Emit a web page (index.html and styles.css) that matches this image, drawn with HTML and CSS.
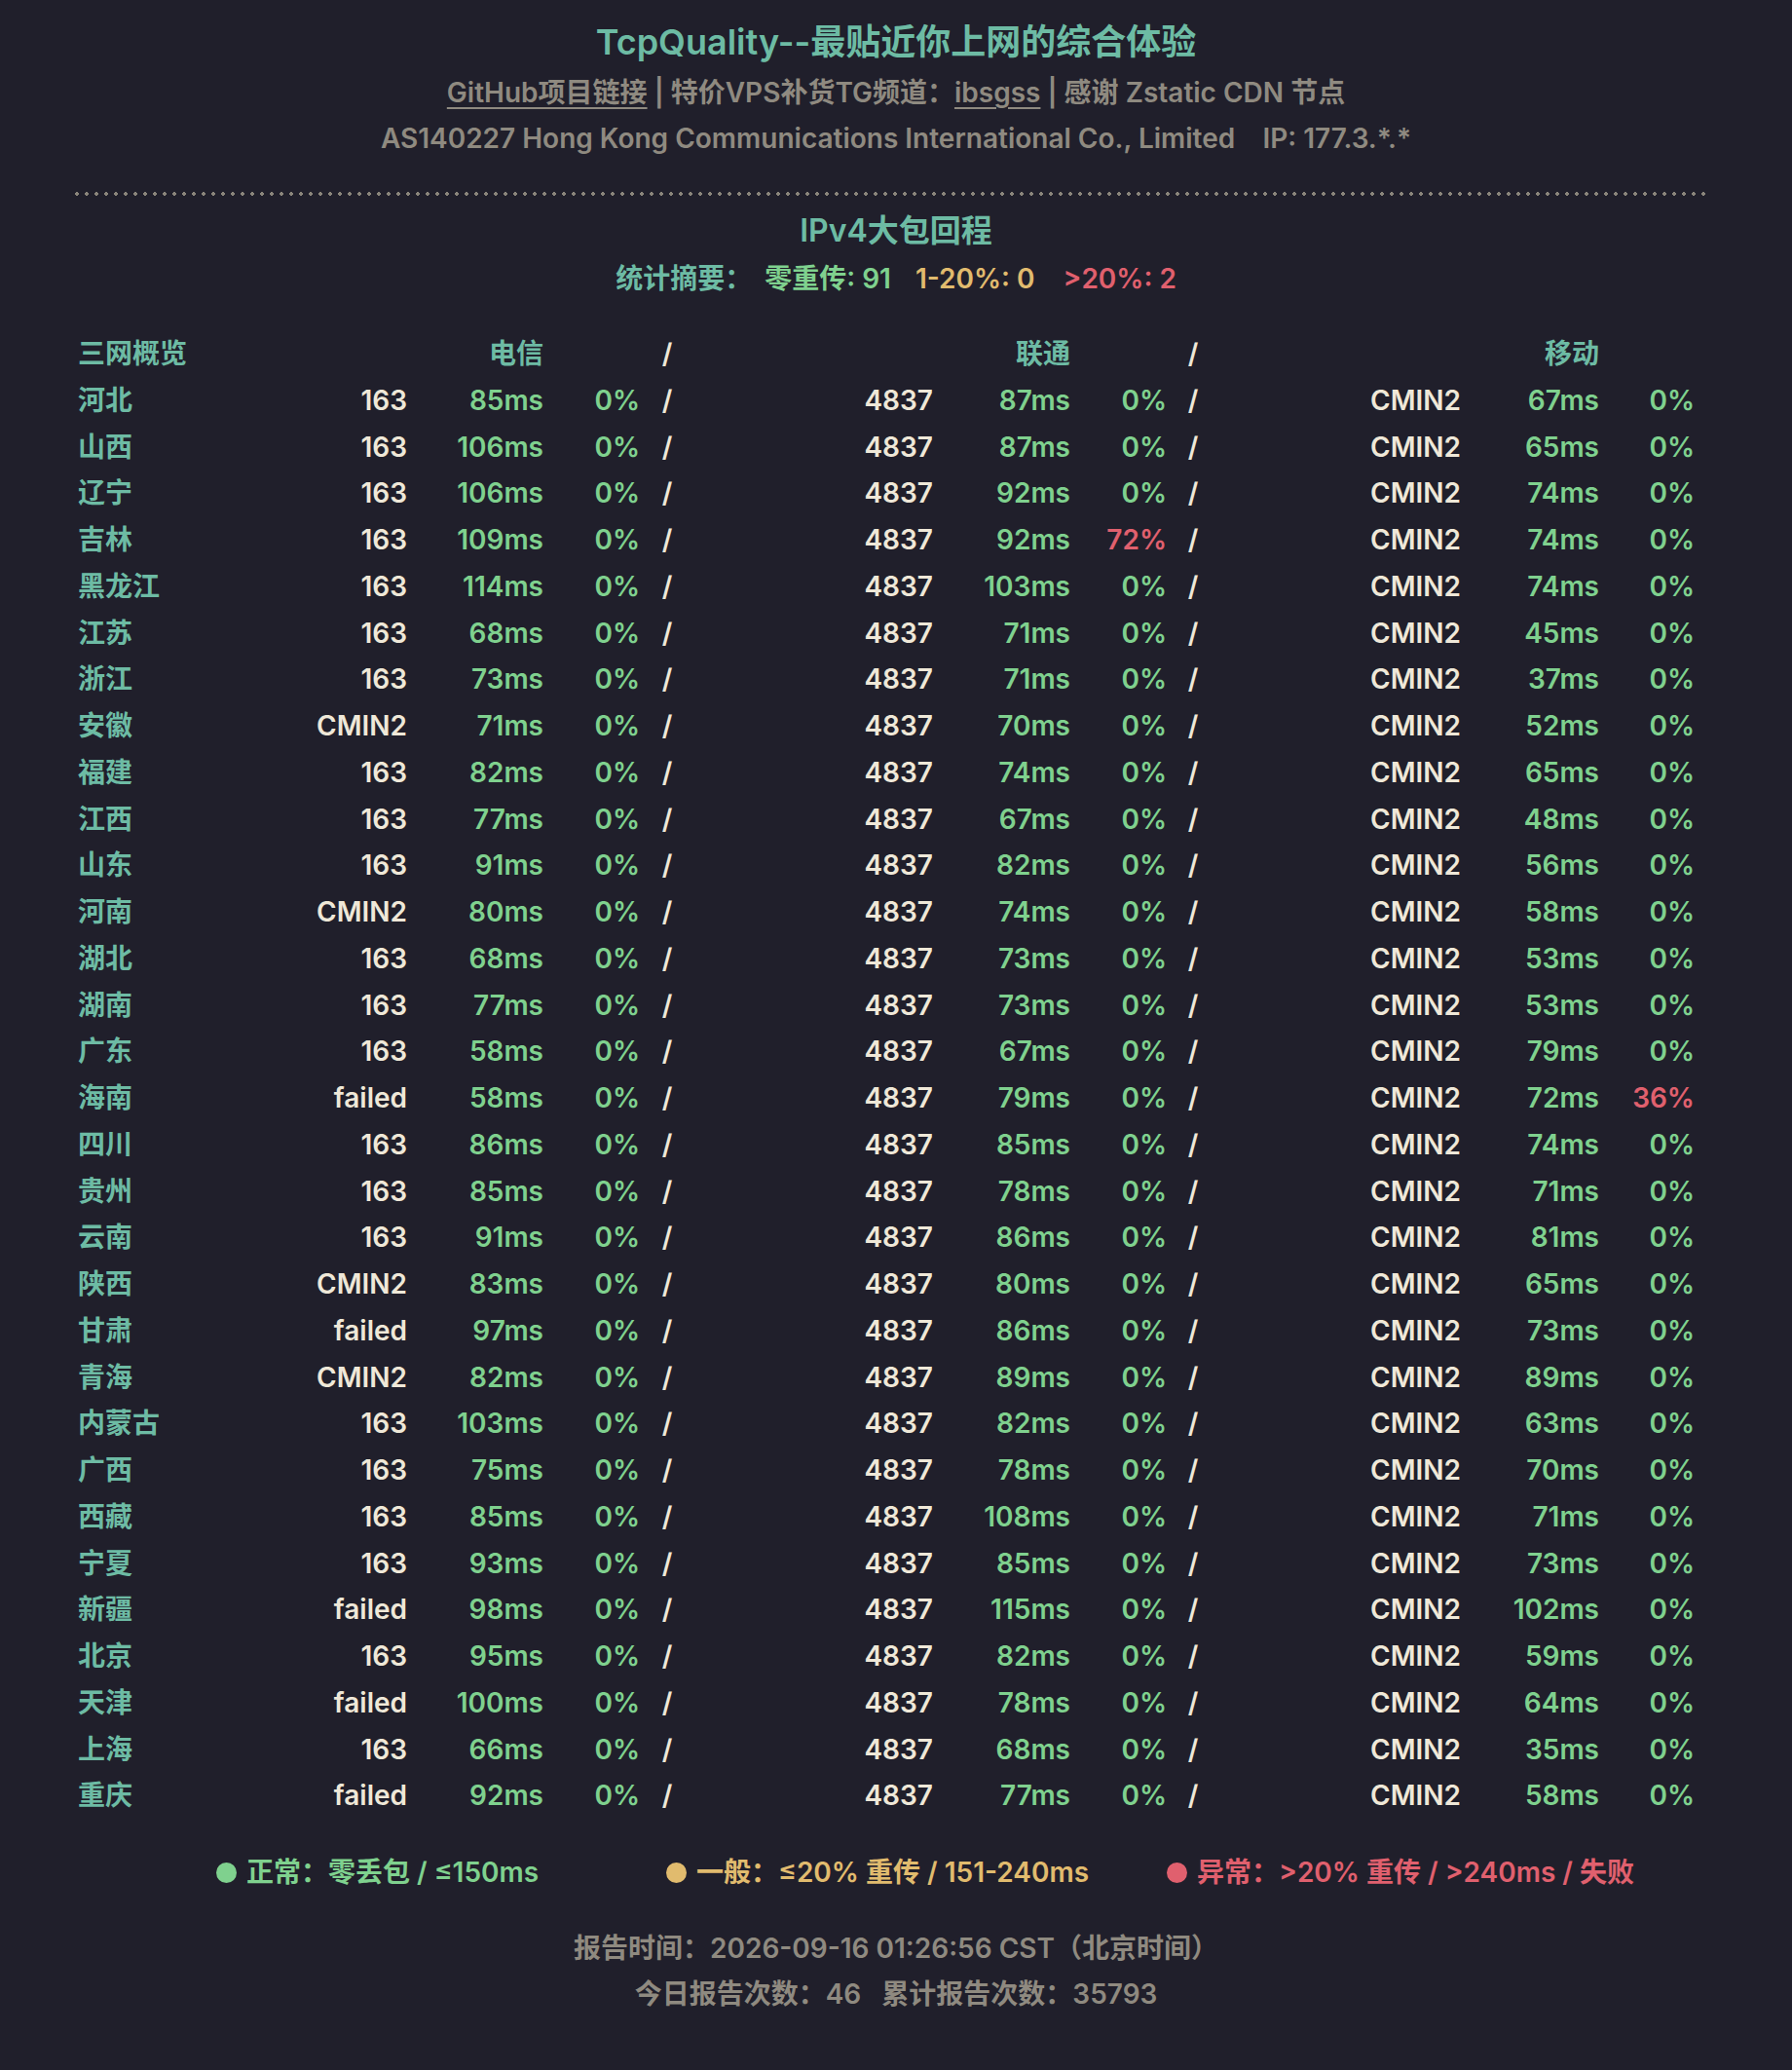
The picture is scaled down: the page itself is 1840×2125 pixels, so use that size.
FILE: index.html
```html
<!DOCTYPE html>
<html lang="zh-CN">
<head>
<meta charset="utf-8">
<title>TcpQuality</title>
<link rel="stylesheet" href="styles.css">
</head>
<body>
<div class="page">
  <header class="head">
    <h1 class="title">TcpQuality--最贴近你上网的综合体验</h1>
    <p class="sub"><a class="lnk" href="#">GitHub项目链接</a> | 特价VPS补货TG频道：<a class="lnk" href="#">ibsgss</a> | 感谢 Zstatic CDN 节点</p>
    <p class="asline">AS140227 Hong Kong Communications International Co., Limited&nbsp;&nbsp;&nbsp;&nbsp;IP: 177.3.*.*</p>
  </header>
  <div class="dots"></div>
  <h2 class="sec">IPv4大包回程</h2>
  <p class="summary"><span class="teal">统计摘要：</span><span class="g s2">零重传: 91</span><span class="y s3">1-20%: 0</span><span class="r s4">&gt;20%: 2</span></p>

  <div class="tbl">
    <div class="row hdr"><span class="prov">三网概览</span><span></span><span class="ms">电信</span><span></span><span class="sl">/</span><span></span><span class="ms">联通</span><span></span><span class="sl">/</span><span></span><span class="ms">移动</span><span></span></div>
    <div class="row"><span class="prov">河北</span><span class="as">163</span><span class="ms">85ms</span><span class="pc">0%</span><span class="sl">/</span><span class="as">4837</span><span class="ms">87ms</span><span class="pc">0%</span><span class="sl">/</span><span class="as">CMIN2</span><span class="ms">67ms</span><span class="pc">0%</span></div>
    <div class="row"><span class="prov">山西</span><span class="as">163</span><span class="ms">106ms</span><span class="pc">0%</span><span class="sl">/</span><span class="as">4837</span><span class="ms">87ms</span><span class="pc">0%</span><span class="sl">/</span><span class="as">CMIN2</span><span class="ms">65ms</span><span class="pc">0%</span></div>
    <div class="row"><span class="prov">辽宁</span><span class="as">163</span><span class="ms">106ms</span><span class="pc">0%</span><span class="sl">/</span><span class="as">4837</span><span class="ms">92ms</span><span class="pc">0%</span><span class="sl">/</span><span class="as">CMIN2</span><span class="ms">74ms</span><span class="pc">0%</span></div>
    <div class="row"><span class="prov">吉林</span><span class="as">163</span><span class="ms">109ms</span><span class="pc">0%</span><span class="sl">/</span><span class="as">4837</span><span class="ms">92ms</span><span class="pc bad">72%</span><span class="sl">/</span><span class="as">CMIN2</span><span class="ms">74ms</span><span class="pc">0%</span></div>
    <div class="row"><span class="prov">黑龙江</span><span class="as">163</span><span class="ms">114ms</span><span class="pc">0%</span><span class="sl">/</span><span class="as">4837</span><span class="ms">103ms</span><span class="pc">0%</span><span class="sl">/</span><span class="as">CMIN2</span><span class="ms">74ms</span><span class="pc">0%</span></div>
    <div class="row"><span class="prov">江苏</span><span class="as">163</span><span class="ms">68ms</span><span class="pc">0%</span><span class="sl">/</span><span class="as">4837</span><span class="ms">71ms</span><span class="pc">0%</span><span class="sl">/</span><span class="as">CMIN2</span><span class="ms">45ms</span><span class="pc">0%</span></div>
    <div class="row"><span class="prov">浙江</span><span class="as">163</span><span class="ms">73ms</span><span class="pc">0%</span><span class="sl">/</span><span class="as">4837</span><span class="ms">71ms</span><span class="pc">0%</span><span class="sl">/</span><span class="as">CMIN2</span><span class="ms">37ms</span><span class="pc">0%</span></div>
    <div class="row"><span class="prov">安徽</span><span class="as">CMIN2</span><span class="ms">71ms</span><span class="pc">0%</span><span class="sl">/</span><span class="as">4837</span><span class="ms">70ms</span><span class="pc">0%</span><span class="sl">/</span><span class="as">CMIN2</span><span class="ms">52ms</span><span class="pc">0%</span></div>
    <div class="row"><span class="prov">福建</span><span class="as">163</span><span class="ms">82ms</span><span class="pc">0%</span><span class="sl">/</span><span class="as">4837</span><span class="ms">74ms</span><span class="pc">0%</span><span class="sl">/</span><span class="as">CMIN2</span><span class="ms">65ms</span><span class="pc">0%</span></div>
    <div class="row"><span class="prov">江西</span><span class="as">163</span><span class="ms">77ms</span><span class="pc">0%</span><span class="sl">/</span><span class="as">4837</span><span class="ms">67ms</span><span class="pc">0%</span><span class="sl">/</span><span class="as">CMIN2</span><span class="ms">48ms</span><span class="pc">0%</span></div>
    <div class="row"><span class="prov">山东</span><span class="as">163</span><span class="ms">91ms</span><span class="pc">0%</span><span class="sl">/</span><span class="as">4837</span><span class="ms">82ms</span><span class="pc">0%</span><span class="sl">/</span><span class="as">CMIN2</span><span class="ms">56ms</span><span class="pc">0%</span></div>
    <div class="row"><span class="prov">河南</span><span class="as">CMIN2</span><span class="ms">80ms</span><span class="pc">0%</span><span class="sl">/</span><span class="as">4837</span><span class="ms">74ms</span><span class="pc">0%</span><span class="sl">/</span><span class="as">CMIN2</span><span class="ms">58ms</span><span class="pc">0%</span></div>
    <div class="row"><span class="prov">湖北</span><span class="as">163</span><span class="ms">68ms</span><span class="pc">0%</span><span class="sl">/</span><span class="as">4837</span><span class="ms">73ms</span><span class="pc">0%</span><span class="sl">/</span><span class="as">CMIN2</span><span class="ms">53ms</span><span class="pc">0%</span></div>
    <div class="row"><span class="prov">湖南</span><span class="as">163</span><span class="ms">77ms</span><span class="pc">0%</span><span class="sl">/</span><span class="as">4837</span><span class="ms">73ms</span><span class="pc">0%</span><span class="sl">/</span><span class="as">CMIN2</span><span class="ms">53ms</span><span class="pc">0%</span></div>
    <div class="row"><span class="prov">广东</span><span class="as">163</span><span class="ms">58ms</span><span class="pc">0%</span><span class="sl">/</span><span class="as">4837</span><span class="ms">67ms</span><span class="pc">0%</span><span class="sl">/</span><span class="as">CMIN2</span><span class="ms">79ms</span><span class="pc">0%</span></div>
    <div class="row"><span class="prov">海南</span><span class="as">failed</span><span class="ms">58ms</span><span class="pc">0%</span><span class="sl">/</span><span class="as">4837</span><span class="ms">79ms</span><span class="pc">0%</span><span class="sl">/</span><span class="as">CMIN2</span><span class="ms">72ms</span><span class="pc bad">36%</span></div>
    <div class="row"><span class="prov">四川</span><span class="as">163</span><span class="ms">86ms</span><span class="pc">0%</span><span class="sl">/</span><span class="as">4837</span><span class="ms">85ms</span><span class="pc">0%</span><span class="sl">/</span><span class="as">CMIN2</span><span class="ms">74ms</span><span class="pc">0%</span></div>
    <div class="row"><span class="prov">贵州</span><span class="as">163</span><span class="ms">85ms</span><span class="pc">0%</span><span class="sl">/</span><span class="as">4837</span><span class="ms">78ms</span><span class="pc">0%</span><span class="sl">/</span><span class="as">CMIN2</span><span class="ms">71ms</span><span class="pc">0%</span></div>
    <div class="row"><span class="prov">云南</span><span class="as">163</span><span class="ms">91ms</span><span class="pc">0%</span><span class="sl">/</span><span class="as">4837</span><span class="ms">86ms</span><span class="pc">0%</span><span class="sl">/</span><span class="as">CMIN2</span><span class="ms">81ms</span><span class="pc">0%</span></div>
    <div class="row"><span class="prov">陕西</span><span class="as">CMIN2</span><span class="ms">83ms</span><span class="pc">0%</span><span class="sl">/</span><span class="as">4837</span><span class="ms">80ms</span><span class="pc">0%</span><span class="sl">/</span><span class="as">CMIN2</span><span class="ms">65ms</span><span class="pc">0%</span></div>
    <div class="row"><span class="prov">甘肃</span><span class="as">failed</span><span class="ms">97ms</span><span class="pc">0%</span><span class="sl">/</span><span class="as">4837</span><span class="ms">86ms</span><span class="pc">0%</span><span class="sl">/</span><span class="as">CMIN2</span><span class="ms">73ms</span><span class="pc">0%</span></div>
    <div class="row"><span class="prov">青海</span><span class="as">CMIN2</span><span class="ms">82ms</span><span class="pc">0%</span><span class="sl">/</span><span class="as">4837</span><span class="ms">89ms</span><span class="pc">0%</span><span class="sl">/</span><span class="as">CMIN2</span><span class="ms">89ms</span><span class="pc">0%</span></div>
    <div class="row"><span class="prov">内蒙古</span><span class="as">163</span><span class="ms">103ms</span><span class="pc">0%</span><span class="sl">/</span><span class="as">4837</span><span class="ms">82ms</span><span class="pc">0%</span><span class="sl">/</span><span class="as">CMIN2</span><span class="ms">63ms</span><span class="pc">0%</span></div>
    <div class="row"><span class="prov">广西</span><span class="as">163</span><span class="ms">75ms</span><span class="pc">0%</span><span class="sl">/</span><span class="as">4837</span><span class="ms">78ms</span><span class="pc">0%</span><span class="sl">/</span><span class="as">CMIN2</span><span class="ms">70ms</span><span class="pc">0%</span></div>
    <div class="row"><span class="prov">西藏</span><span class="as">163</span><span class="ms">85ms</span><span class="pc">0%</span><span class="sl">/</span><span class="as">4837</span><span class="ms">108ms</span><span class="pc">0%</span><span class="sl">/</span><span class="as">CMIN2</span><span class="ms">71ms</span><span class="pc">0%</span></div>
    <div class="row"><span class="prov">宁夏</span><span class="as">163</span><span class="ms">93ms</span><span class="pc">0%</span><span class="sl">/</span><span class="as">4837</span><span class="ms">85ms</span><span class="pc">0%</span><span class="sl">/</span><span class="as">CMIN2</span><span class="ms">73ms</span><span class="pc">0%</span></div>
    <div class="row"><span class="prov">新疆</span><span class="as">failed</span><span class="ms">98ms</span><span class="pc">0%</span><span class="sl">/</span><span class="as">4837</span><span class="ms">115ms</span><span class="pc">0%</span><span class="sl">/</span><span class="as">CMIN2</span><span class="ms">102ms</span><span class="pc">0%</span></div>
    <div class="row"><span class="prov">北京</span><span class="as">163</span><span class="ms">95ms</span><span class="pc">0%</span><span class="sl">/</span><span class="as">4837</span><span class="ms">82ms</span><span class="pc">0%</span><span class="sl">/</span><span class="as">CMIN2</span><span class="ms">59ms</span><span class="pc">0%</span></div>
    <div class="row"><span class="prov">天津</span><span class="as">failed</span><span class="ms">100ms</span><span class="pc">0%</span><span class="sl">/</span><span class="as">4837</span><span class="ms">78ms</span><span class="pc">0%</span><span class="sl">/</span><span class="as">CMIN2</span><span class="ms">64ms</span><span class="pc">0%</span></div>
    <div class="row"><span class="prov">上海</span><span class="as">163</span><span class="ms">66ms</span><span class="pc">0%</span><span class="sl">/</span><span class="as">4837</span><span class="ms">68ms</span><span class="pc">0%</span><span class="sl">/</span><span class="as">CMIN2</span><span class="ms">35ms</span><span class="pc">0%</span></div>
    <div class="row"><span class="prov">重庆</span><span class="as">failed</span><span class="ms">92ms</span><span class="pc">0%</span><span class="sl">/</span><span class="as">4837</span><span class="ms">77ms</span><span class="pc">0%</span><span class="sl">/</span><span class="as">CMIN2</span><span class="ms">58ms</span><span class="pc">0%</span></div>
  </div>

  <div class="legend">
    <span class="item g it1"><i class="dot"></i>正常：零丢包 / ≤150ms</span>
    <span class="item y it2"><i class="dot"></i>一般：≤20% 重传 / 151-240ms</span>
    <span class="item r"><i class="dot"></i>异常：&gt;20% 重传 / &gt;240ms / 失败</span>
  </div>

  <footer class="foot">
    <p class="fl">报告时间：2026-09-16 01:26:56 CST（北京时间）</p>
    <p class="fl">今日报告次数：46&nbsp;&nbsp;&nbsp;累计报告次数：35793</p>
  </footer>
</div>
</body>
</html>
```

FILE: styles.css
```css
html, body {
  margin: 0;
  padding: 0;
  background: #201f2b;
}
body {
  font-family: "Inter", "Noto Sans CJK SC", sans-serif;
  font-weight: 600;
  color: #8f8a80;
}
.page {
  width: 1680px;
  margin: 0 auto;
  padding-top: 20px;
  padding-bottom: 40px;
}
.head {
  text-align: center;
}
.title {
  margin: 0;
  font-size: 36px;
  line-height: 46px;
  font-weight: 600;
  color: #6dbba4;
}
.sub {
  margin: 9px 0 0;
  font-size: 28px;
  line-height: 40px;
  color: #8f8a80;
}
.lnk {
  color: #8f8a80;
  text-decoration: underline;
  text-decoration-thickness: 2px;
  text-underline-offset: 5px;
}
.asline {
  margin: 7px 0 0;
  font-size: 28px;
  line-height: 40px;
  color: #8f8a80;
}
.dots {
  margin-top: 35px;
  height: 4px;
  background-image: radial-gradient(circle at 2px 2px, #8a857b 1.6px, transparent 2.1px);
  background-size: 10px 4px;
  background-repeat: repeat-x;
  margin-left: -3px;
  margin-right: 5px;
}
.sec {
  margin: 16px 0 0;
  text-align: center;
  font-size: 32px;
  line-height: 40px;
  font-weight: 600;
  color: #6dbba4;
}
.summary {
  margin: 9px 0 0;
  text-align: center;
  font-size: 28px;
  line-height: 40px;
}
.s2 { margin-left: 13px; }
.s3 { margin-left: 25px; }
.s4 { margin-left: 29px; }
.teal { color: #6dbba4; }
.g { color: #7fd18e; }
.y { color: #e1bb6e; }
.r { color: #e0606e; }

.tbl {
  margin-top: 34px;
}
.row {
  display: grid;
  grid-template-columns: 201px 137px 140px 99px 56px 245px 141px 99px 54px 248px 142px 98px;
  font-size: 28px;
  line-height: 47.75px;
  color: #efe8d8;
}
.row > span {
  white-space: nowrap;
  text-align: right;
}
.row .prov {
  text-align: left;
  color: #6dbba4;
}
.row .as { color: #efe8d8; }
.row .ms { color: #7fd18e; }
.row .pc { color: #7fd18e; }
.row .pc.bad { color: #e0606e; }
.row .sl { text-align: center; color: #efe8d8; }
.row.hdr .ms { color: #6dbba4; }

.legend {
  margin-top: 34px;
  display: flex;
  justify-content: flex-start;
  padding-left: 142px;
  font-size: 28px;
  line-height: 40px;
}
.item {
  display: inline-flex;
  align-items: center;
  white-space: nowrap;
}
.it1 { margin-right: 131px; }
.it2 { margin-right: 80px; }
.dot {
  display: inline-block;
  width: 21px;
  height: 21px;
  border-radius: 50%;
  background: currentColor;
  margin-right: 10px;
}
.foot {
  margin-top: 35px;
  text-align: center;
}
.fl {
  margin: 0;
  font-size: 28px;
  line-height: 47px;
  color: #8f8a80;
}
```
